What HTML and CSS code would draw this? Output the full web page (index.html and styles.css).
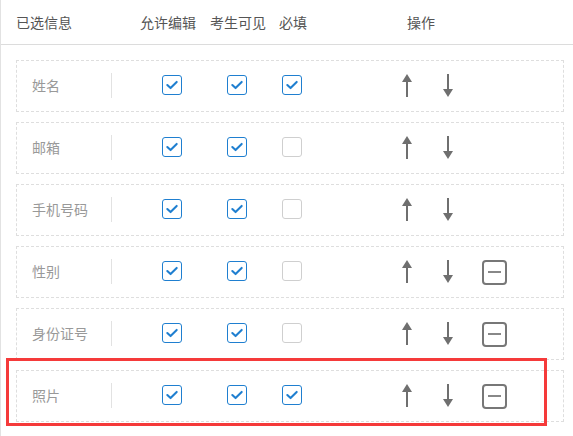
FILE: index.html
```html
<!DOCTYPE html>
<html lang="zh">
<head>
<meta charset="utf-8">
<link rel="stylesheet" href="styles.css">
</head>
<body>
<div class="panel">
  <div class="head">
    <span class="h-title">已选信息</span>
    <span class="h-edit">允许编辑</span>
    <span class="h-visible">考生可见</span>
    <span class="h-required">必填</span>
    <span class="h-ops">操作</span>
  </div>
  <div class="rows">
    <div class="row">
      <div class="label">姓名</div>
      <span class="cb c1 on"><svg viewBox="0 0 20 20"><path d="M4.8 10 L8.4 13.4 L15.2 6.6"/></svg></span>
      <span class="cb c2 on"><svg viewBox="0 0 20 20"><path d="M4.8 10 L8.4 13.4 L15.2 6.6"/></svg></span>
      <span class="cb c3 on"><svg viewBox="0 0 20 20"><path d="M4.8 10 L8.4 13.4 L15.2 6.6"/></svg></span>
      <svg class="arrow up" viewBox="0 0 12 24"><polygon points="6,0 11,8 1,8"/><rect x="5" y="7" width="2" height="16"/></svg>
      <svg class="arrow down" viewBox="0 0 12 24"><polygon points="6,23 11,15 1,15"/><rect x="5" y="0" width="2" height="16"/></svg>
    </div>
    <div class="row">
      <div class="label">邮箱</div>
      <span class="cb c1 on"><svg viewBox="0 0 20 20"><path d="M4.8 10 L8.4 13.4 L15.2 6.6"/></svg></span>
      <span class="cb c2 on"><svg viewBox="0 0 20 20"><path d="M4.8 10 L8.4 13.4 L15.2 6.6"/></svg></span>
      <span class="cb c3"></span>
      <svg class="arrow up" viewBox="0 0 12 24"><polygon points="6,0 11,8 1,8"/><rect x="5" y="7" width="2" height="16"/></svg>
      <svg class="arrow down" viewBox="0 0 12 24"><polygon points="6,23 11,15 1,15"/><rect x="5" y="0" width="2" height="16"/></svg>
    </div>
    <div class="row">
      <div class="label">手机号码</div>
      <span class="cb c1 on"><svg viewBox="0 0 20 20"><path d="M4.8 10 L8.4 13.4 L15.2 6.6"/></svg></span>
      <span class="cb c2 on"><svg viewBox="0 0 20 20"><path d="M4.8 10 L8.4 13.4 L15.2 6.6"/></svg></span>
      <span class="cb c3"></span>
      <svg class="arrow up" viewBox="0 0 12 24"><polygon points="6,0 11,8 1,8"/><rect x="5" y="7" width="2" height="16"/></svg>
      <svg class="arrow down" viewBox="0 0 12 24"><polygon points="6,23 11,15 1,15"/><rect x="5" y="0" width="2" height="16"/></svg>
    </div>
    <div class="row">
      <div class="label">性别</div>
      <span class="cb c1 on"><svg viewBox="0 0 20 20"><path d="M4.8 10 L8.4 13.4 L15.2 6.6"/></svg></span>
      <span class="cb c2 on"><svg viewBox="0 0 20 20"><path d="M4.8 10 L8.4 13.4 L15.2 6.6"/></svg></span>
      <span class="cb c3"></span>
      <svg class="arrow up" viewBox="0 0 12 24"><polygon points="6,0 11,8 1,8"/><rect x="5" y="7" width="2" height="16"/></svg>
      <svg class="arrow down" viewBox="0 0 12 24"><polygon points="6,23 11,15 1,15"/><rect x="5" y="0" width="2" height="16"/></svg>
      <span class="remove"><span class="bar"></span></span>
    </div>
    <div class="row">
      <div class="label">身份证号</div>
      <span class="cb c1 on"><svg viewBox="0 0 20 20"><path d="M4.8 10 L8.4 13.4 L15.2 6.6"/></svg></span>
      <span class="cb c2 on"><svg viewBox="0 0 20 20"><path d="M4.8 10 L8.4 13.4 L15.2 6.6"/></svg></span>
      <span class="cb c3"></span>
      <svg class="arrow up" viewBox="0 0 12 24"><polygon points="6,0 11,8 1,8"/><rect x="5" y="7" width="2" height="16"/></svg>
      <svg class="arrow down" viewBox="0 0 12 24"><polygon points="6,23 11,15 1,15"/><rect x="5" y="0" width="2" height="16"/></svg>
      <span class="remove"><span class="bar"></span></span>
    </div>
    <div class="row">
      <div class="label">照片</div>
      <span class="cb c1 on"><svg viewBox="0 0 20 20"><path d="M4.8 10 L8.4 13.4 L15.2 6.6"/></svg></span>
      <span class="cb c2 on"><svg viewBox="0 0 20 20"><path d="M4.8 10 L8.4 13.4 L15.2 6.6"/></svg></span>
      <span class="cb c3 on"><svg viewBox="0 0 20 20"><path d="M4.8 10 L8.4 13.4 L15.2 6.6"/></svg></span>
      <svg class="arrow up" viewBox="0 0 12 24"><polygon points="6,0 11,8 1,8"/><rect x="5" y="7" width="2" height="16"/></svg>
      <svg class="arrow down" viewBox="0 0 12 24"><polygon points="6,23 11,15 1,15"/><rect x="5" y="0" width="2" height="16"/></svg>
      <span class="remove"><span class="bar"></span></span>
    </div>
  </div>
  <div class="highlight"></div>
</div>
</body>
</html>
```

FILE: styles.css
```css
html, body {
  margin: 0;
  padding: 0;
  background: #fff;
}
body {
  font-family: "Noto Sans CJK SC", "Noto Sans", sans-serif;
  font-size: 14px;
  width: 573px;
  height: 436px;
  overflow: hidden;
}
.panel {
  position: relative;
  height: 436px;
  border-left: 1px solid #e2e2e2;
  box-sizing: border-box;
}
.head {
  display: flex;
  align-items: center;
  height: 44px;
  border-bottom: 1px solid #dcdcdc;
  padding-left: 15px;
  color: #555;
  line-height: 20px;
}
.head span { white-space: nowrap; }
.h-title { width: 56px; }
.h-edit { margin-left: 68px; }
.h-visible { margin-left: 14px; }
.h-required { margin-left: 13px; }
.h-ops { margin-left: 100px; }

.rows {
  display: flex;
  flex-direction: column;
  gap: 10px;
  padding: 15px 9px 0 15px;
}
.row {
  display: flex;
  align-items: center;
  height: 50px;
  border: 1px dashed #dedede;
}
.label {
  width: 79px;
  padding-left: 15px;
  height: 25px;
  line-height: 25px;
  border-right: 1px solid #e2e2e2;
  color: #999;
  white-space: nowrap;
  margin-top: -2px;
}
.cb {
  width: 20px;
  height: 20px;
  border: 1px solid #cfcfcf;
  border-radius: 3px;
  box-sizing: border-box;
  display: flex;
  margin-top: -2px;
}
.cb.on {
  border: 1.5px solid #1f7fd0;
}
.cb svg {
  width: 100%;
  height: 100%;
  fill: none;
  stroke: #1f7fd0;
  stroke-width: 2.3;
  stroke-linecap: round;
  stroke-linejoin: round;
}
.c1 { margin-left: 50px; }
.c2 { margin-left: 45px; }
.c3 { margin-left: 35px; }
.arrow {
  width: 12px;
  height: 24px;
  fill: #6f6f6f;
}
.up { margin-left: 99px; }
.down { margin-left: 29px; }
.remove {
  margin-left: 28px;
  width: 25px;
  height: 25px;
  border: 2px solid #777;
  border-radius: 4px;
  box-sizing: border-box;
  display: flex;
  align-items: center;
  justify-content: center;
}
.remove .bar {
  width: 13px;
  height: 2px;
  background: #888;
}
.highlight {
  position: absolute;
  left: 5px;
  top: 358px;
  width: 541px;
  height: 68px;
  border: 3px solid #f53a3a;
  box-sizing: border-box;
}
```
